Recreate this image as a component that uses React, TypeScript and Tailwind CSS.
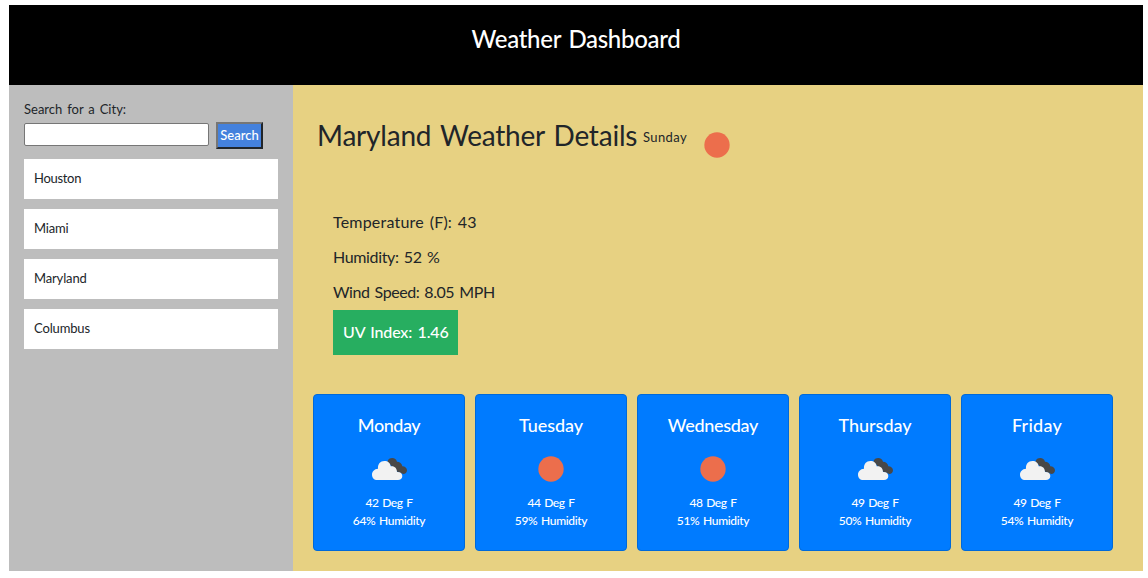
const cities = [
  { name: "Houston", tracking: "tracking-[-0.3px]" },
  { name: "Miami", tracking: "tracking-[-0.2px]" },
  { name: "Maryland", tracking: "tracking-[-0.15px]" },
  { name: "Columbus", tracking: "tracking-[-0.15px]" },
];

const forecast = [
  { day: "Monday", icon: "cloud", temp: 42, humidity: 64, tracking: "tracking-[-0.45px]" },
  { day: "Tuesday", icon: "sun", temp: 44, humidity: 59, tracking: "tracking-[-0.05px]" },
  { day: "Wednesday", icon: "sun", temp: 48, humidity: 51, tracking: "tracking-[-0.3px]" },
  { day: "Thursday", icon: "cloud", temp: 49, humidity: 50, tracking: "tracking-[0px]" },
  { day: "Friday", icon: "cloud", temp: 49, humidity: 54, tracking: "tracking-[0.25px]" },
];

function WeatherIcon({ type }: { type: string }) {
  return (
    <svg viewBox="12 0 150 135" className="h-[45px] w-[50px] shrink-0">
      {type === "sun" ? (
        <circle cx="87" cy="72" r="38" fill="#ec6e4c" />
      ) : (
        <>
          <path
            d="M82 50 C84 42 90 39 97 39 C104 39 109 43 111 50 C119 50 126 55 127 64 C135 64 141 69 141 76 C141 83 136 87 130 87 L112 80 Z"
            fill="#484848"
          />
          <path
            d="M52 105 C42 105 36 98 36 89 C36 79 43 72 54 71 C53 57 61 48 73 48 C84 48 91 54 92 64 C103 62 111 69 111 81 C120 80 127 85 127 93 C127 101 121 105 114 105 Z"
            fill="#f2f2f2"
          />
        </>
      )}
    </svg>
  );
}

export default function App() {
  return (
    <div className="h-[578px] w-[1148px] bg-white pt-[5px] pr-[5px] pl-[9px] font-['Trebuchet_MS','Lato',sans-serif] text-[#212529]">
      <header className="flex h-20 justify-center bg-black pt-[16px]">
        <h1 className="text-[24px] leading-[36px] font-medium tracking-[-0.3px] text-white [word-spacing:2px]">Weather Dashboard</h1>
      </header>
      <div className="flex h-[486px]">
        <aside className="w-[284px] shrink-0 bg-[#bdbdbd] px-[15px] pt-[14px]">
          <label htmlFor="city" className="block text-[13px] leading-[21px] [word-spacing:1.6px]">
            Search for a City:
          </label>
          <div className="mt-[2px] flex items-start gap-[7px]">
            <input
              id="city"
              className="mt-px h-[23px] w-[185px] rounded-[2px] border border-[#767676] bg-white px-1 text-[13px] outline-none"
            />
            <button className="h-[27px] w-[47px] border-2 border-t-[#767676] border-r-[#212529] border-b-[#212529] border-l-[#767676] bg-[#4481dd] text-[13px] leading-[21px] font-medium text-white">
              Search
            </button>
          </div>
          <ul className="mt-[10px] flex flex-col gap-[10px]">
            {cities.map((c) => (
              <li key={c.name} className={`h-10 bg-white px-[10px] text-[13px] leading-[39px] ${c.tracking}`}>
                {c.name}
              </li>
            ))}
          </ul>
        </aside>
        <main className="flex-1 bg-[#e7d182] pl-5">
          <div className="flex h-[105px] items-start pt-[30px] pl-1">
            <h2 className="w-[326px] text-[28px] leading-[41px] tracking-[-0.2px] whitespace-nowrap [word-spacing:2px]">
              Maryland Weather Details
            </h2>
            <span className="w-[49px] pt-[12px] text-[13px] leading-[21px] tracking-[0.4px]">Sunday</span>
            <div className="pt-[6px]">
              <WeatherIcon type="sun" />
            </div>
          </div>
          <div className="flex h-[204px] flex-col items-start pt-[14px] pl-5 text-[16px] leading-[35px] [word-spacing:1.5px]">
            <p className="tracking-[0.2px]">Temperature (F): 43</p>
            <p className="tracking-[-0.35px]">Humidity: 52 %</p>
            <p className="tracking-[-0.45px]">Wind Speed: 8.05 MPH</p>
            <p className="mt-px h-[45px] w-[125px] bg-[#27ae60] pl-[10px] leading-[43px] font-medium tracking-[-0.15px] whitespace-nowrap text-white">
              UV Index: 1.46
            </p>
          </div>
          <div className="flex gap-[10px]">
            {forecast.map((f) => (
              <div
                key={f.day}
                className="flex h-[157px] w-[152px] flex-col items-center rounded-[4px] border border-[#0069d9] bg-[#007bff] pt-[17px] text-white"
              >
                <h3 className={`text-[18px] leading-[26px] font-medium ${f.tracking}`}>{f.day}</h3>
                <div className="mt-[7px]">
                  <WeatherIcon type={f.icon} />
                </div>
                <p className="mt-[4px] text-[12px] leading-[18px] font-medium tracking-[-0.4px] [word-spacing:1px]">{f.temp} Deg F</p>
                <p className="text-[12px] leading-[18px] font-medium tracking-[-0.35px] [word-spacing:1px]">{f.humidity}% Humidity</p>
              </div>
            ))}
          </div>
        </main>
      </div>
    </div>
  );
}
